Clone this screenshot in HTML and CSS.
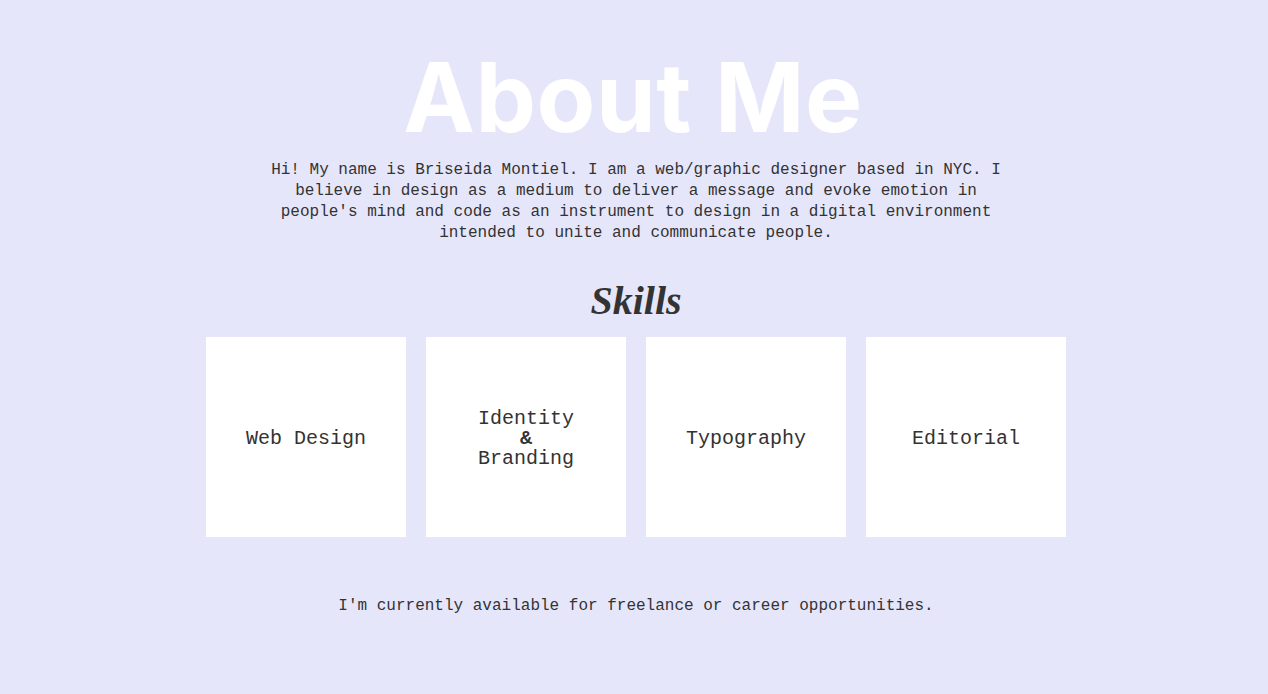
FILE: index.html
```html
<!DOCTYPE html>
<html lang="en">
<head>
<meta charset="utf-8">
<title>About Me</title>
<link rel="stylesheet" href="styles.css">
</head>
<body>
<main class="about">
  <h1 class="title">About Me</h1>
  <p class="intro">Hi! My name is Briseida Montiel. I am a web/graphic designer based in NYC. I believe in design as a medium to deliver a message and evoke emotion in people's mind and code as an instrument to design in a digital environment intended to unite and communicate people.</p>
  <h2 class="skills-title">Skills</h2>
  <div class="skills">
    <div class="skill"><span>Web Design</span></div>
    <div class="skill"><span>Identity<br><strong>&amp;</strong><br>Branding</span></div>
    <div class="skill"><span>Typography</span></div>
    <div class="skill"><span>Editorial</span></div>
  </div>
  <p class="available">I'm currently available for freelance or career opportunities.</p>
</main>
</body>
</html>
```

FILE: styles.css
```css
html, body {
  margin: 0;
  padding: 0;
  background: #e6e6fa;
}
body {
  font-family: "Liberation Mono", "DejaVu Sans Mono", monospace;
  color: #333333;
}
.about {
  display: flex;
  flex-direction: column;
  align-items: center;
  padding-left: 4px;
}
.title {
  margin: 49px 6px 0 0;
  font-family: "Inter", "Open Sans", sans-serif;
  font-weight: 700;
  font-size: 96px;
  line-height: 1;
  letter-spacing: 0.5px;
  color: #ffffff;
}
.intro {
  width: 760px;
  margin: 15px 0 0;
  font-size: 16px;
  line-height: 21px;
  text-align: center;
}
.skills-title {
  margin: 33px 0 0;
  font-family: "Liberation Serif", "DejaVu Serif", serif;
  font-style: italic;
  font-weight: 700;
  font-size: 40px;
  line-height: 48px;
  color: #333333;
}
.skills {
  display: flex;
  gap: 20px;
  margin-top: 12px;
}
.skill {
  width: 200px;
  height: 200px;
  background: #ffffff;
  display: flex;
  align-items: center;
  justify-content: center;
  text-align: center;
  font-size: 20px;
  line-height: 20px;
}
.skill span {
  display: block;
  padding-top: 4px;
}
.available {
  margin: 59px 0 0;
  font-size: 16px;
  line-height: 21px;
  text-align: center;
}
```
